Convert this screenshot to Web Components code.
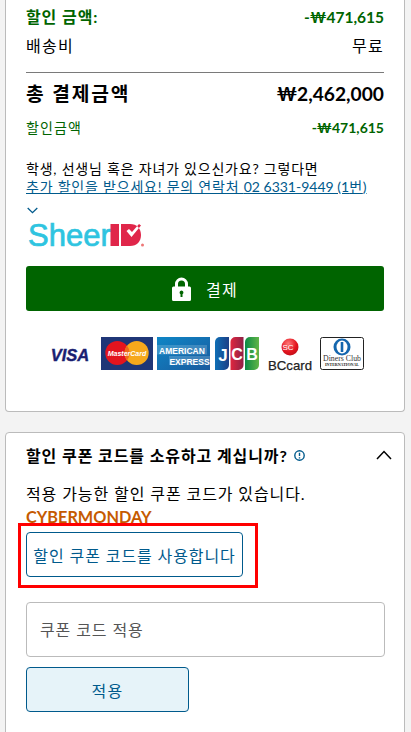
<!DOCTYPE html>
<html lang="ko"><head><meta charset="utf-8"><title>결제</title>
<style>
html,body{margin:0;padding:0;background:#f3f3f3;height:732px;overflow:hidden}
body{font-family:Lato,"Noto Sans CJK KR",sans-serif;color:#000;font-size:16px}
</style></head><body>
<checkout-page></checkout-page>
<script>
function def(name, html){
  customElements.define(name, class extends HTMLElement{
    constructor(){super();this.attachShadow({mode:'open'}).innerHTML=html;}
  });
}
def('panel-card',`<style>:host{display:block;background:#fff;border:1px solid #bbb;border-radius:4px;margin:0 6px 0 5px;padding:0 20px;box-sizing:border-box}</style><slot></slot>`);
def('price-row',`<style>:host{display:flex;justify-content:space-between;align-items:center}</style><slot name="l"></slot><slot name="r"></slot>`);
def('lock-icon',`<style>:host{display:inline-flex}</style><svg width="19" height="24" viewBox="0 0 19 24"><path fill="#fff" d="M1.500 9.500H3V7a6.500 6.500 0 0 1 13 0v2.500h1.500A1.500 1.500 0 0 1 19 11v11.500a1.500 1.500 0 0 1-1.500 1.500h-16A1.500 1.500 0 0 1 0 22.500V11a1.500 1.500 0 0 1 1.500-1.500zM6 9.500h7V7a3.500 3.500 0 0 0-7 0zM9.500 13.500a2 2 0 0 0-1 3.700V20h2v-2.800a2 2 0 0 0-1-3.700z" fill-rule="evenodd"/></svg>`);
def('pay-logos',`<style>:host{display:flex;justify-content:flex-start;align-items:flex-start;height:33px}svg{display:block;flex:none;overflow:visible}</style>
<svg width="47" height="33" viewBox="0 0 47 33" style="margin-left:19px"><text x="25" y="23.500" text-anchor="middle" font-family="Liberation Sans" font-weight="700" font-style="italic" font-size="16.500" fill="#1a1f71" stroke="#1a1f71" stroke-width=".4">VISA</text></svg>
<svg width="52" height="33" viewBox="0 0 52 33" style="margin-left:9px"><rect width="52" height="33" fill="#1f3677"/><circle cx="16.300" cy="16" r="12" fill="#e3141e"/><circle cx="35.700" cy="16" r="12" fill="#f6a81c"/><path d="M26 8.500a12 12 0 0 1 0 15a12 12 0 0 1 0-15z" fill="#ee6a1a"/><text x="26" y="19" text-anchor="middle" font-family="Liberation Sans" font-weight="700" font-style="italic" font-size="7" fill="#fff">MasterCard</text></svg>
<svg width="53" height="33" viewBox="0 0 53 33" style="margin-left:4px"><defs><linearGradient id="a" x1="0" y1="0" x2="1" y2="1"><stop offset="0" stop-color="#0e86c6"/><stop offset="1" stop-color="#1a5a9e"/></linearGradient></defs><rect width="53" height="33" fill="url(#a)"/><rect x="0" y="8" width="50" height="9.500" fill="#fff" fill-opacity=".18"/><rect x="12" y="19" width="41" height="9" fill="#fff" fill-opacity=".18"/><text x="25" y="16.500" text-anchor="middle" font-family="Liberation Sans" font-weight="700" font-size="8.500" fill="#fff">AMERICAN</text><text x="32.500" y="27.500" text-anchor="middle" font-family="Liberation Sans" font-weight="700" font-size="8.500" fill="#fff">EXPRESS</text></svg>
<svg width="44" height="33" viewBox="0 0 44 33" style="margin-left:5px"><defs><linearGradient id="j" x1="0" x2="1"><stop offset="0" stop-color="#0f6fb5"/><stop offset="1" stop-color="#1b3f87"/></linearGradient><linearGradient id="c" x1="0" x2="1"><stop offset="0" stop-color="#e0263f"/><stop offset="1" stop-color="#8e2146"/></linearGradient><linearGradient id="b" x1="0" x2="1"><stop offset="0" stop-color="#0a8a45"/><stop offset="1" stop-color="#62b548"/></linearGradient></defs><path fill="url(#j)" d="M0 5a5 5 0 0 1 5-5h9v28a5 5 0 0 1-5 5H0z"/><path fill="url(#c)" d="M15.500 5a5 5 0 0 1 5-5h8v28a5 5 0 0 1-5 5h-8z"/><path fill="url(#b)" d="M30 5a5 5 0 0 1 5-5h9v28a5 5 0 0 1-5 5h-9z"/><text x="8" y="24" text-anchor="middle" font-family="Liberation Sans" font-weight="700" font-size="17" fill="#fff">J</text><text x="22" y="23" text-anchor="middle" font-family="Liberation Sans" font-weight="700" font-size="16" fill="#fff">C</text><text x="37" y="23" text-anchor="middle" font-family="Liberation Sans" font-weight="700" font-size="16" fill="#fff">B</text></svg>
<svg width="44" height="33" viewBox="0 0 44 33" style="margin-left:9px"><defs><radialGradient id="r" cx=".4" cy=".3" r=".8"><stop offset="0" stop-color="#f77"/><stop offset=".6" stop-color="#e3141e"/><stop offset="1" stop-color="#b80d17"/></radialGradient></defs><circle cx="22" cy="10" r="8.500" fill="url(#r)"/><text x="20" y="13" text-anchor="middle" font-family="Liberation Sans" font-size="8" fill="#fff">SC</text><text x="22" y="32.500" text-anchor="middle" font-family="Liberation Sans" font-size="13.200" fill="#222" stroke="#222" stroke-width=".25">BCcard</text></svg>
<svg width="44" height="33" viewBox="0 0 44 33" style="margin-left:8px"><rect x=".5" y=".5" width="43" height="32" rx="2" fill="#fff" stroke="#222"/><circle cx="22" cy="10" r="8.500" fill="#1466ae"/><ellipse cx="22" cy="10" rx="5.500" ry="6.500" fill="#fff"/><rect x="20.700" y="5" width="2.600" height="10" fill="#1466ae"/><text x="22" y="24" text-anchor="middle" font-family="Liberation Serif" font-size="7.800" fill="#333">Diners Club</text><text x="22" y="29" text-anchor="middle" font-family="Liberation Serif" font-weight="700" font-size="4" fill="#222">INTERNATIONAL</text></svg>`);
def('sheer-logo',`<style>:host{display:block;height:30px}svg{display:block;overflow:visible}</style><svg width="116" height="30" viewBox="0 0 116 30"><text x="0" y="28" font-family="Liberation Sans" font-size="31" fill="#2ec4e0" stroke="#2ec4e0" stroke-width=".7">Sheer</text><rect x="82.500" y="6" width="8.500" height="22" fill="#e0264a"/><path fill="#e0264a" fill-rule="evenodd" d="M93 6h9c7 0 11 4.500 11 11S109 28 102 28H93zM98.500 13l5 6L113 7.500l-2-1.500-7 8-3-3z"/><circle cx="114.500" cy="27" r="1.500" fill="#e77"/></svg>`);
def('checkout-page',`<style>
:host{display:block;font-family:Lato,"Noto Sans CJK KR",sans-serif}
.k{letter-spacing:.08em}
.m{letter-spacing:.056em}
.c1{border-top:0;border-radius:0 0 4px 4px;padding-top:7px;height:412px;margin-bottom:20px}
.g{color:#006400;font-weight:700;font-size:16px;line-height:20px}
.g span[slot=r]{font-size:15.500px}
.n{font-size:16px;line-height:20px}
.r1{height:20px}.r2{height:20px;margin-top:9px}
hr{border:0;border-top:1px solid #7a7a7a;margin:16px 0 0;height:0}
.tot{margin-top:9px;height:24px}
.tot span{font-weight:700;font-size:19.200px;line-height:24px}
.tot .w{letter-spacing:.1em}
.disc{margin-top:11px;height:20px;color:#006400}
.disc span{font-size:14px;font-weight:700}.disc span:first-child{font-weight:400}
.help{margin-top:23px;font-size:14px;line-height:18px}
.help a{color:#005a8c;text-decoration:underline;display:block;white-space:nowrap}
.chev{display:block;margin:11px 0 4px 1px}
sheer-logo{margin-left:2px}
.pay{margin-top:18px;height:45px;background:#006400;border-radius:3px;display:flex;align-items:center;justify-content:center;gap:15px;color:#fff;font-size:16px}
pay-logos{margin-top:26px}
.c2{padding-top:11px;height:320px;position:relative}
.h{display:flex;justify-content:space-between;align-items:center;height:22px;font-weight:700;font-size:16px}
.h .t{display:flex;align-items:center;gap:6px}
.h svg.x{margin-right:-8px}
.p{margin-top:17px;font-size:16px;line-height:22px}
.cm{color:#c55a00;font-weight:700;font-size:16.300px;line-height:20px;margin-top:2px;height:20px;overflow:visible}
.hl{position:relative;display:inline-block;margin-top:5px;vertical-align:top}
.hl::before{content:"";position:absolute;left:-8px;top:-9px;right:-15px;bottom:-11px;border:3.500px solid #f00;box-sizing:border-box}
.use{display:block;position:relative;box-sizing:border-box;width:217px;height:45px;border:1px solid #005a8c;border-radius:4px;background:#fff;color:#005a8c;font:inherit;font-size:16px;padding:0;text-align:center}
.in{display:block;box-sizing:border-box;margin-top:25px;width:359px;height:55px;border:1px solid #bbb;border-radius:4px;padding:0 13px;line-height:53px;font-size:16px;color:#555}
.ap{display:block;box-sizing:border-box;margin-top:10px;width:163px;height:45px;border:1px solid #005a8c;border-radius:4px;background:#e6f3f9;color:#005a8c;font:inherit;font-size:16px;padding:0}
.l0{letter-spacing:0}
</style>
<panel-card class="c1">
 <price-row class="g r1"><span slot="l" class="m">할인 금액:</span><span slot="r">-₩471,615</span></price-row>
 <price-row class="n r2"><span slot="l" class="k">배송비</span><span slot="r" class="k">무료</span></price-row>
 <hr>
 <price-row class="tot"><span slot="l" class="w">총 결제금액</span><span slot="r">₩2,462,000</span></price-row>
 <price-row class="disc"><span slot="l" class="k">할인금액</span><span slot="r">-₩471,615</span></price-row>
 <div class="help m">학생, 선생님 혹은 자녀가 있으신가요? 그렇다면<a>추가 할인을 받으세요! 문의 연락처 <span class="l0">02 6331-9449 (1</span>번<span class="l0">)</span></a></div>
 <svg class="chev" width="11" height="7" viewBox="0 0 11 7"><path d="M.7 1l4.800 4.700L10.300 1" fill="none" stroke="#005a8c" stroke-width="1.300"/></svg>
 <sheer-logo></sheer-logo>
 <div class="pay"><lock-icon></lock-icon><span class="k">결제</span></div>
 <pay-logos></pay-logos>
</panel-card>
<panel-card class="c2">
 <div class="h"><span class="t"><span class="m">할인 쿠폰 코드를 소유하고 계십니까?</span><svg width="11" height="11" viewBox="0 0 11 11"><circle cx="5.500" cy="5.500" r="4.700" fill="none" stroke="#005a8c" stroke-width="1.400"/><path d="M5.500 2.700v3.300M5.500 7.200v1.200" stroke="#005a8c" stroke-width="1.400"/></svg></span><svg class="x" width="16" height="10" viewBox="0 0 16 10"><path d="M1 9l7-7.500L15 9" fill="none" stroke="#000" stroke-width="1.500"/></svg></div>
 <div class="p m">적용 가능한 할인 쿠폰 코드가 있습니다.</div>
 <div class="cm">CYBERMONDAY</div>
 <div class="hl"><button class="use m">할인 쿠폰 코드를 사용합니다</button></div>
 <div class="in m">쿠폰 코드 적용</div>
 <button class="ap k">적용</button>
</panel-card>`);
</script>
</body></html>
